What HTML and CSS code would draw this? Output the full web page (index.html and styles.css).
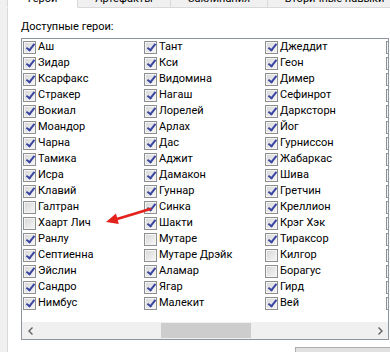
FILE: index.html
```html
<!DOCTYPE html>
<html lang="ru">
<head>
  <meta charset="UTF-8">
  <title>Доступные герои</title>
  <link rel="stylesheet" href="styles.css">
</head>
<body>
  <div class="tabs">
    <div class="tab active w1"><span>Герои</span></div>
    <div class="tab w2"><span>Артефакты</span></div>
    <div class="tab w3"><span>Заклинания</span></div>
    <div class="tab w4"><span>Вторичные навыки</span></div>
  </div>
  <div class="page">
    <div class="caption">Доступные герои:</div>
    <div class="listbox">
      <div class="items">
        <label class="item"><span class="cb on"></span>Аш</label>
        <label class="item"><span class="cb on"></span>Зидар</label>
        <label class="item"><span class="cb on"></span>Ксарфакс</label>
        <label class="item"><span class="cb on"></span>Стракер</label>
        <label class="item"><span class="cb on"></span>Вокиал</label>
        <label class="item"><span class="cb on"></span>Моандор</label>
        <label class="item"><span class="cb on"></span>Чарна</label>
        <label class="item"><span class="cb on"></span>Тамика</label>
        <label class="item"><span class="cb on"></span>Исра</label>
        <label class="item"><span class="cb on"></span>Клавий</label>
        <label class="item"><span class="cb"></span>Галтран</label>
        <label class="item"><span class="cb"></span>Хаарт Лич</label>
        <label class="item"><span class="cb on"></span>Ранлу</label>
        <label class="item"><span class="cb on"></span>Септиенна</label>
        <label class="item"><span class="cb on"></span>Эйслин</label>
        <label class="item"><span class="cb on"></span>Сандро</label>
        <label class="item"><span class="cb on"></span>Нимбус</label>

        <label class="item"><span class="cb on"></span>Тант</label>
        <label class="item"><span class="cb on"></span>Кси</label>
        <label class="item"><span class="cb on"></span>Видомина</label>
        <label class="item"><span class="cb on"></span>Нагаш</label>
        <label class="item"><span class="cb on"></span>Лорелей</label>
        <label class="item"><span class="cb on"></span>Арлах</label>
        <label class="item"><span class="cb on"></span>Дас</label>
        <label class="item"><span class="cb on"></span>Аджит</label>
        <label class="item"><span class="cb on"></span>Дамакон</label>
        <label class="item"><span class="cb on"></span>Гуннар</label>
        <label class="item"><span class="cb on"></span>Синка</label>
        <label class="item"><span class="cb on"></span>Шакти</label>
        <label class="item"><span class="cb"></span>Мутаре</label>
        <label class="item"><span class="cb"></span>Мутаре Дрэйк</label>
        <label class="item"><span class="cb on"></span>Аламар</label>
        <label class="item"><span class="cb on"></span>Ягар</label>
        <label class="item"><span class="cb on"></span>Малекит</label>

        <label class="item"><span class="cb on"></span>Джеддит</label>
        <label class="item"><span class="cb on"></span>Геон</label>
        <label class="item"><span class="cb on"></span>Димер</label>
        <label class="item"><span class="cb on"></span>Сефинрот</label>
        <label class="item"><span class="cb on"></span>Дарксторн</label>
        <label class="item"><span class="cb on"></span>Йог</label>
        <label class="item"><span class="cb on"></span>Гурниссон</label>
        <label class="item"><span class="cb on"></span>Жабаркас</label>
        <label class="item"><span class="cb on"></span>Шива</label>
        <label class="item"><span class="cb on"></span>Гретчин</label>
        <label class="item"><span class="cb on"></span>Креллион</label>
        <label class="item"><span class="cb on"></span>Крэг Хэк</label>
        <label class="item"><span class="cb on"></span>Тираксор</label>
        <label class="item"><span class="cb"></span>Килгор</label>
        <label class="item"><span class="cb"></span>Борагус</label>
        <label class="item"><span class="cb on"></span>Гирд</label>
        <label class="item"><span class="cb on"></span>Вей</label>

        <label class="item"><span class="cb on"></span>Оррин</label>
        <label class="item"><span class="cb on"></span>Валеска</label>
        <label class="item"><span class="cb on"></span>Эдрик</label>
        <label class="item"><span class="cb on"></span>Сильвия</label>
        <label class="item"><span class="cb on"></span>Лорд Хаарт</label>
        <label class="item"><span class="cb on"></span>Сорша</label>
        <label class="item"><span class="cb on"></span>Кристиан</label>
        <label class="item"><span class="cb on"></span>Тирис</label>
        <label class="item"><span class="cb on"></span>Рион</label>
        <label class="item"><span class="cb on"></span>Адела</label>
        <label class="item"><span class="cb on"></span>Кутберт</label>
        <label class="item"><span class="cb on"></span>Аделаида</label>
        <label class="item"><span class="cb on"></span>Ингэм</label>
        <label class="item"><span class="cb on"></span>Санья</label>
        <label class="item"><span class="cb on"></span>Лойнис</label>
        <label class="item"><span class="cb on"></span>Калх</label>
        <label class="item"><span class="cb on"></span>Мефала</label>
      </div>
      <div class="hscroll">
        <div class="sbtn">
          <svg width="6" height="8" viewBox="0 0 6 8"><polyline points="4.5,0.5 1,4 4.5,7.5" fill="none" stroke="#606060" stroke-width="1.4"/></svg>
        </div>
        <div class="track"><div class="thumb"></div></div>
        <div class="sbtn">
          <svg width="6" height="8" viewBox="0 0 6 8"><polyline points="1.5,0.5 5,4 1.5,7.5" fill="none" stroke="#606060" stroke-width="1.4"/></svg>
        </div>
      </div>
    </div>
    <div class="buttons"><button class="btn">OK</button></div>
  </div>

  <!-- красная стрелка поверх списка -->
  <svg class="arrow" width="60" height="30" viewBox="0 0 60 30">
    <path d="M17 19 Q34 14 50 9" fill="none" stroke="#e3221c" stroke-width="2.8" stroke-linecap="round"/>
    <polygon points="6,22 18.8,24 16,13.6" fill="#e3221c"/>
  </svg>
</body>
</html>
```

FILE: styles.css
```css
body {
  margin: 0;
  width: 390px;
  height: 352px;
  overflow: hidden;
  position: relative;
  background: #f0f0f0;
  font-family: Roboto, "Liberation Sans", sans-serif;
  font-size: 11px;
  color: #000;
}

.tabs { display: flex; height: 8px; padding-left: 7px; }
.tab {
  box-sizing: border-box;
  height: 8px;
  border-right: 1px solid #d9d9d9;
  border-bottom: 1px solid #d9d9d9;
  background: #f0f0f0;
  display: flex; align-items: flex-end; justify-content: center;
  padding-bottom: 2px;
  flex-shrink: 0;
}
.tab span { line-height: 12px; white-space: nowrap; }
.tab.active { background: #fff; border-left: 1px solid #d9d9d9; border-bottom-color: #fff; }
.w1 { width: 71px; }
.w2 { width: 93px; }
.w3 { width: 97px; }
.w4 { width: 134px; }

.page {
  margin-left: 7px;
  border-left: 1px solid #d9d9d9;
  background: #fff;
  height: 344px;
  padding-left: 13px;
  overflow: hidden;
}
.caption { margin-top: 11px; line-height: 16px; white-space: nowrap; }

.listbox {
  margin-top: 3px;
  width: 366px;
  height: 300px;
  border: 1px solid #8f959c;
  display: flex; flex-direction: column;
  overflow: hidden;
}
.items {
  display: grid;
  grid-auto-flow: column;
  grid-template-rows: repeat(17, 16px);
  grid-auto-columns: 121px;
}
.item {
  display: flex; align-items: center;
  padding-left: 1px;
  line-height: 16px;
  white-space: nowrap;
}

.cb {
  position: relative;
  box-sizing: border-box;
  width: 13px; height: 13px;
  margin-right: 2px;
  flex-shrink: 0;
  border: 1px solid #8e8f8f;
  background: linear-gradient(135deg, #d6d6d6, #f7f7f7);
  box-shadow: inset 0 0 0 1px #f4f4f4;
}
.cb.on::after {
  content: "";
  position: absolute;
  left: 3.5px; top: 0.5px;
  width: 3px; height: 7px;
  border-right: 2px solid #3846a0;
  border-bottom: 2px solid #3846a0;
  transform: rotate(38deg);
}

.hscroll {
  margin-top: auto;
  height: 17px;
  background: #f0f0f0;
  display: flex;
}
.sbtn { width: 17px; display: flex; align-items: center; justify-content: center; }
.track { flex: 1; display: flex; align-items: center; }
.thumb { margin-left: 122px; width: 90px; height: 15px; background: #cdcdcd; }

.buttons { padding-left: 274px; margin-top: 7px; }
.btn {
  width: 110px; height: 23px;
  border: 1px solid #adadad;
  background: #e1e1e1;
  font: inherit;
}

.arrow { position: absolute; left: 100px; top: 200px; }
```
